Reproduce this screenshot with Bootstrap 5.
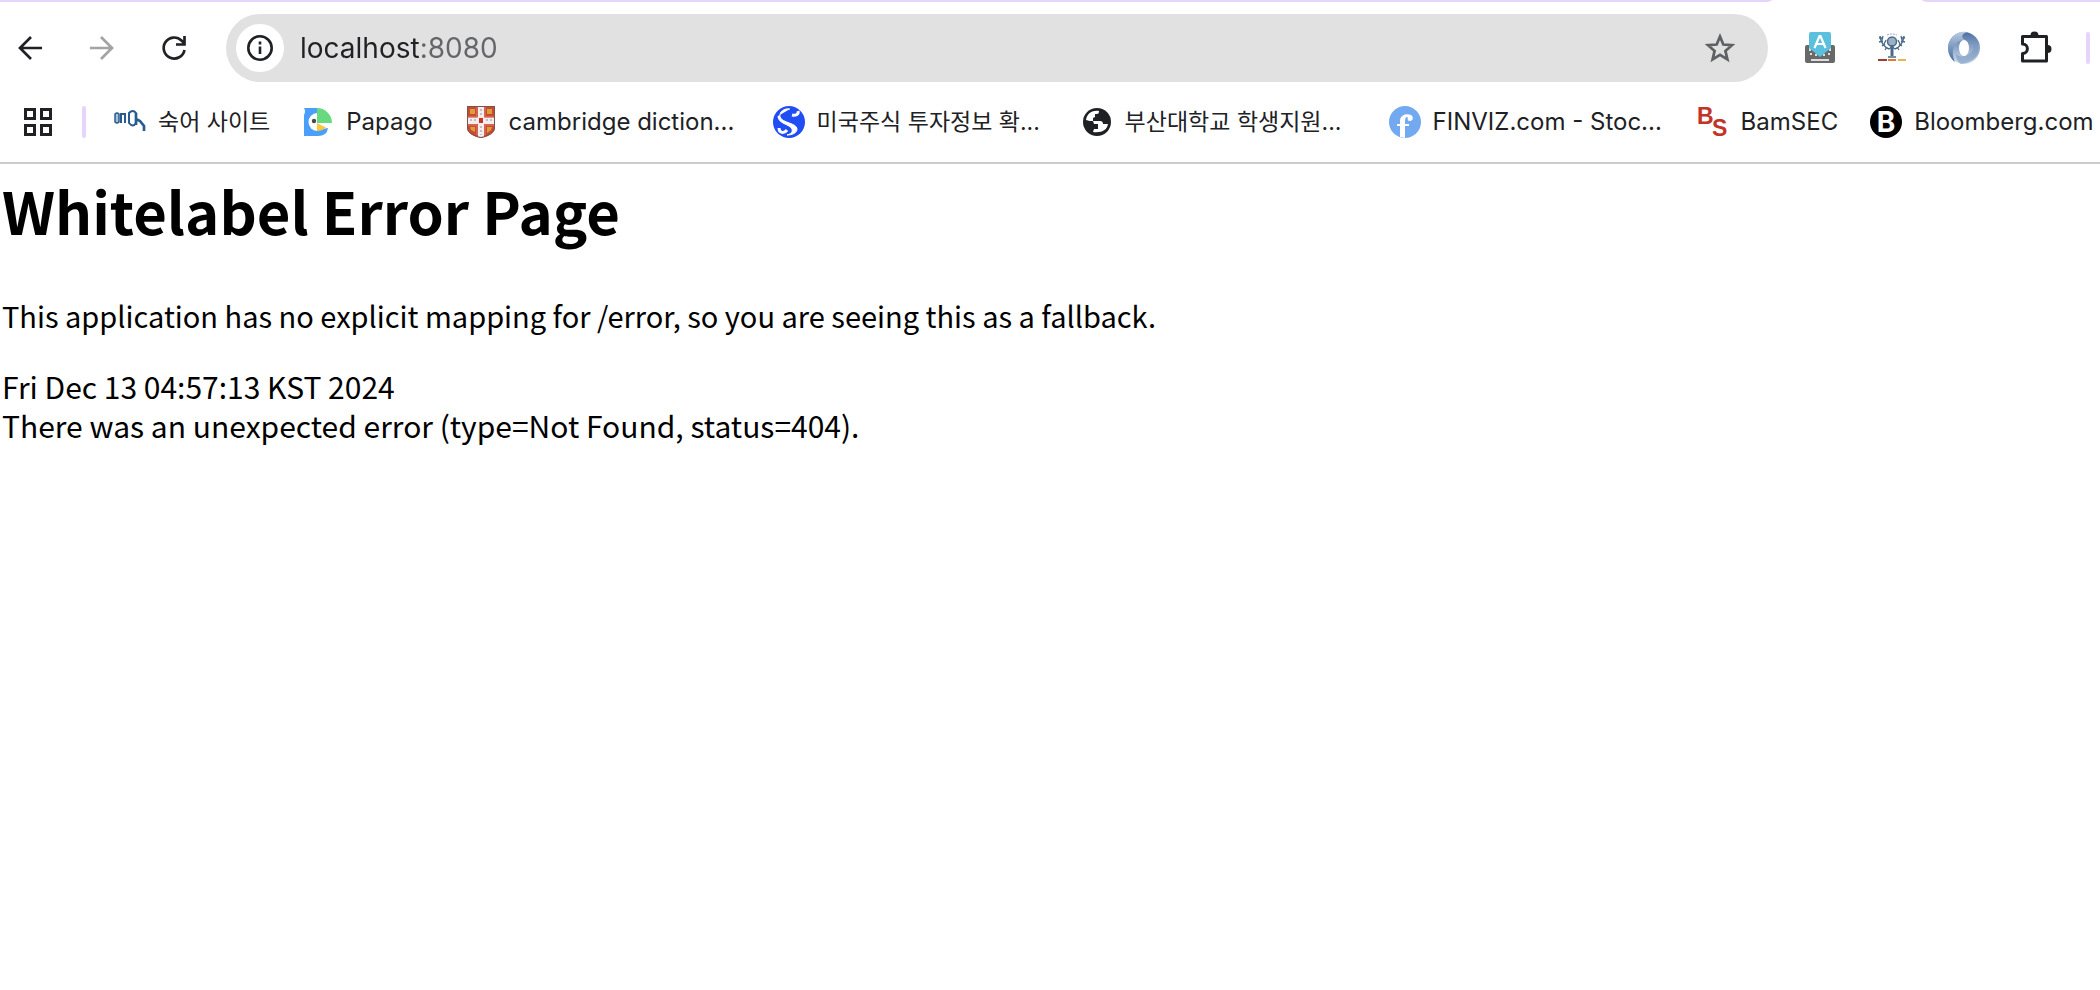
<!DOCTYPE html>
<html lang="en">
<head>
<meta charset="utf-8">
<meta name="viewport" content="width=device-width, initial-scale=1">
<title>localhost:8080</title>
<link href="https://cdn.jsdelivr.net/npm/bootstrap@5.3.0/dist/css/bootstrap.min.css" rel="stylesheet">
<style>
:root { --ink: #202124; --lilac: #e6d5fa; --rule: #cccccc; }
body { background: #fff; color: #000; overflow-x: hidden; font-family: "Noto Sans CJK KR", "Noto Sans", sans-serif; }
.browser-ui { font-family: Inter, "Noto Sans CJK KR", sans-serif; color: var(--ink); border-bottom: 2px solid var(--rule); }
.tab-edge { height: 2px; }
.tab-edge span { background: var(--lilac); }
.edge-start { border-bottom-right-radius: 8px 2px; }
.edge-end { border-bottom-left-radius: 8px 2px; width: 178px; }
.tab-gap { width: 150px; }
.toolbar { height: 92px; padding-left: 14px; padding-right: 10px; }
.tool { border: 0; padding: 0; background: none; width: 32px; height: 32px; line-height: 0; color: var(--ink); flex: none; }
.tool:disabled { color: #a3a3a3; }
.tool svg, .mark-icon { width: 32px; height: 32px; display: block; flex: none; overflow: visible; }
.nav-tools { gap: 40px; margin-right: 36px; }
.omnibox { height: 68px; background: #e1e1e1; padding: 0 32px 0 10px; }
.site-info { width: 48px; height: 48px; background: #fff; border: 0; padding: 0; flex: none; color: var(--ink); }
.address { border: 0; outline: 0; font-size: 28px; height: 48px; line-height: 48px; padding: 0; margin-left: 16px; color: var(--ink);
  background: linear-gradient(90deg, #202124 119px, #646569 119px); -webkit-background-clip: text; background-clip: text; -webkit-text-fill-color: transparent; }
.ext-tools { gap: 40px; margin: 0 34px 0 36px; }
.bar-rule { width: 4px; height: 32px; border-radius: 2px; background: var(--lilac); flex: none; }
.bookmarks { height: 68px; padding-bottom: 12px; padding-left: 22px; }
.bookmarks .bar-rule { margin: 0 28px; }
.bm { gap: 12px; font-size: 24px; line-height: 32px; color: var(--ink); margin-right: 32px; flex: none; white-space: nowrap; }
.bm:lang(ko) { font-size: 23px; }
.bm-capped { width: 276px; }
.error-page { padding: 8px 2px; font-size: 30px; line-height: 39px; }
.error-page h1 { font-size: 58px; line-height: 76px; font-weight: 700; margin-bottom: 48px; }
.error-page p { font-size: 29px; margin-bottom: 32px; }
</style>
</head>
<body>
<header class="browser-ui">
  <div class="tab-edge d-flex"><span class="edge-start flex-grow-1"></span><div class="tab-gap"></div><span class="edge-end"></span></div>
  <div class="toolbar d-flex align-items-center">
    <div class="nav-tools d-flex">
      <button class="tool" type="button" aria-label="Back"><svg viewBox="0 0 32 32" fill="none" stroke="currentColor" stroke-width="2.700"><path d="M28 16H6M17 5 6 16l11 11"/></svg></button>
      <button class="tool" type="button" aria-label="Forward" disabled><svg viewBox="0 0 32 32" fill="none" stroke="currentColor" stroke-width="2.700"><path d="M4 16h22M15 5l11 11-11 11"/></svg></button>
      <button class="tool" type="button" aria-label="Reload"><svg viewBox="0 0 32 32" fill="none" stroke="currentColor" stroke-width="2.700"><path d="M26.500 18A10.500 10.500 0 1 1 23.500 8.500L26 11M26.500 4v8.500H18"/></svg></button>
    </div>
    <div class="omnibox d-flex align-items-center flex-grow-1 rounded-pill">
      <button class="site-info rounded-circle d-flex align-items-center justify-content-center" type="button" aria-label="View site information"><svg width="28" height="28" viewBox="0 0 28 28" fill="none" stroke="currentColor" stroke-width="2.600"><circle cx="14" cy="14" r="11.700"/><path d="M14 12.500v7.500M14 7.500v3"/></svg></button>
      <input class="address flex-grow-1" type="text" value="localhost:8080" aria-label="Address">
      <button class="tool" type="button" aria-label="Bookmark this tab"><svg viewBox="0 0 32 32" fill="none" stroke="#5f6063" stroke-width="2.700"><path d="m16 4.500 3.300 8 8.700.700-6.600 5.700 2 8.500L16 22.800l-7.400 4.600 2-8.500L4 13.200l8.700-.7z"/></svg></button>
    </div>
    <div class="ext-tools d-flex align-items-center">
      <button class="tool" type="button" aria-label="Keyboard extension"><svg viewBox="0 0 32 32"><path fill="#696969" d="M3 13h26a2 2 0 0 1 2 2v14a2 2 0 0 1-2 2H3a2 2 0 0 1-2-2V15a2 2 0 0 1 2-2z"/><g fill="#ddd"><path d="M5 16h2v3H5zM25 16h2v3h-2zM6 21h2v2H6zM11 22h2v2h-2zM19 22h2v2h-2zM24 21h2v2h-2zM7 27h18v2H7z"/></g><path fill="#5bc0de" d="M7 0h18a2 2 0 0 1 2 2v14L16 25 5 16V2a2 2 0 0 1 2-2z"/><path d="m10.500 16 5-12h1l5 12M12.500 12h7" fill="none" stroke="#fff" stroke-width="2.200"/></svg></button>
      <button class="tool" type="button" aria-label="Trophy extension"><svg viewBox="0 0 32 32"><g fill="none" stroke="#4a6a88"><path d="M4 4c1 7 4 11 9 13M28 4c-1 7-4 11-9 13" stroke-width="1.500"/><path d="M3 6l3 0M3 10l4-1M6 14l3-2M9 18l2-3M7 4l-1 4M10 8l-2 4M29 6h-3M29 10l-4-1M26 14l-3-2M23 18l-2-3M25 4l1 4M22 8l2 4" stroke-width="1.300"/><path d="M11 3q5-2 10 0" stroke-dasharray="2 1" stroke="#93a7ba"/><circle cx="16" cy="9.500" r="4.500" fill="#9bb1c4" stroke-width="1.500"/><path d="M16 13v11" stroke-width="3"/><path d="M12 25h8M13 17l3-2 3 2" stroke-width="1.500"/></g><path fill="#a33a30" d="M2 27h9v2H2z"/><path fill="#dc7a35" d="M12 27h8v2h-8z"/><path fill="#e5b74f" d="M22 27h8v2h-8z"/></svg></button>
      <button class="tool" type="button" aria-label="Ring extension"><svg viewBox="0 0 32 32"><defs><linearGradient id="ringA" x1="0" y1="0" x2="0" y2="1"><stop stop-color="#b9cbe2"/><stop offset="1" stop-color="#45699d"/></linearGradient><linearGradient id="ringB" x1="0" y1="0" x2="0" y2="1"><stop stop-color="#4c6fa2"/><stop offset="1" stop-color="#d2e0f0"/></linearGradient></defs><circle cx="16" cy="16" r="16" fill="url(#ringB)"/><path fill="url(#ringA)" d="M19 0C8-2 0 7 0 16c0 6 3 11 7 14C2 19 6 8 17 8c-6-4-1-7 2-8z"/><path fill="#7795bd" d="M13 32c8-1 15-5 17-11 2-5-1-11-6-14 4 8 1 16-8 17-3 1-6 0-8-2 0 5 2 8 5 10z" opacity=".55"/><ellipse cx="16" cy="16" rx="5" ry="8" fill="#fff"/></svg></button>
      <button class="tool" type="button" aria-label="Extensions"><svg viewBox="0 0 32 32"><path fill="none" stroke="#202124" stroke-width="3" stroke-linejoin="round" d="M2.500 4.500h24v24.500h-24v-7.500c6.500 0 6.500-9.500 0-9.500z"/><path fill="#202124" d="M10.500 3.500a4 4 0 0 1 8 0zM27.500 13a4 4 0 0 1 0 8z"/></svg></button>
    </div>
    <span class="bar-rule"></span>
  </div>
  <nav class="bookmarks d-flex align-items-center" aria-label="Bookmarks">
    <button class="tool" type="button" aria-label="Apps"><svg viewBox="0 0 32 32" fill="none" stroke="currentColor" stroke-width="3"><path d="M3.500 3.500h9v9h-9zM19.500 3.500h9v9h-9zM3.500 19.500h9v9h-9zM19.500 19.500h9v9h-9z"/></svg></button>
    <span class="bar-rule"></span>
    <a class="bm d-flex align-items-center text-decoration-none" href="#" lang="ko"><svg class="mark-icon" viewBox="0 0 32 32" fill="none" stroke="#285c91" stroke-width="2"><path fill="#a9bfd5" stroke-width="1.500" d="M1 8q2-2 4 0v8q-2 2-4 0z"/><path d="M7 17V8h4v9"/><path d="M15 7q4-4 7 0v10q-3 5-7 0z"/><path d="M22 13l4 2 4 5v5M22 7v12" stroke-width="2.700"/></svg><span>숙어 사이트</span></a>
    <a class="bm d-flex align-items-center text-decoration-none" href="#"><svg class="mark-icon" viewBox="0 0 32 32"><path fill="#499ffa" d="M2 2h13v22l11-2q-1 8-10 8H2V9q2-4 0-7z"/><path fill="#fff" d="M15 7a8.500 9 0 0 0 0 18z"/><path fill="#69d980" d="M15 2a15 15 0 0 1 15 15H15z"/><path fill="#f9c83f" d="M15 17l9 4.500q-4 3.500-9 3.500z"/><circle cx="12" cy="15" r="2.200" fill="#4a4851"/></svg><span>Papago</span></a>
    <a class="bm bm-capped d-flex align-items-center text-decoration-none" href="#"><svg class="mark-icon" viewBox="0 0 32 32"><path d="M2 0h28v22c0 5-7 9-14 10C9 31 2 27 2 22z" fill="#c94a34"/><path d="M13 1h6v30h-6zM3 11h26v7H3z" fill="#f4eeee"/><path d="M12 1v10H3M20 1v10h9M12 29V19H3M20 29V19h9" fill="none" stroke="#dc6e5c" stroke-width="1.500"/><path fill="#d9a035" d="M5 3h5v5H5zM22 3h5v5h-5zM5 21h5v5L6 24zM22 21h5l-1 3-4 3z"/><path fill="#c93626" d="M14 12h4v5h-4z"/><path d="M16 3v7M16 20v9M5 14h6M21 14h6" stroke="#c4bfc0" stroke-width="2" stroke-dasharray="2 2"/><path d="M2.500.500h27V22c0 5-7 8-13.500 9.500C9 30 2.500 27 2.500 22z" fill="none" stroke="#79544c"/></svg><span>cambridge diction...</span></a>
    <a class="bm bm-capped d-flex align-items-center text-decoration-none" href="#" lang="ko"><svg class="mark-icon" viewBox="0 0 32 32"><circle cx="16" cy="16" r="16" fill="#204df4"/><path d="M17 3C11 2 6 6 7 11c2 6 17 6 17 12 0 4-5 6-10 6 4-1 6-3 5-6C17 18 5 18 5 10" fill="#fff" stroke="#fff" stroke-width="1"/><path d="M19 9c4 1 7-1 6-4M6 22c0 5 5 6 8 2" fill="none" stroke="#fff" stroke-width="3"/></svg><span>미국주식 투자정보 확...</span></a>
    <a class="bm bm-capped d-flex align-items-center text-decoration-none" href="#" lang="ko"><svg class="mark-icon" viewBox="0 0 32 32"><circle cx="16" cy="16" r="14" fill="#202124"/><path fill="#fff" d="M5 14C6 7 12 4 18 5c0 3-1 3-4 3v3l-2 1v3h7q3 0 3 3h5c-1 6-6 9-15 8l1-3h4v-5h-4l-1-3c-3 0-4 0-7-1z"/></svg><span>부산대학교 학생지원...</span></a>
    <a class="bm bm-capped d-flex align-items-center text-decoration-none" href="#"><svg class="mark-icon" viewBox="0 0 32 32"><circle cx="16" cy="16" r="16" fill="#73a9f0"/><path fill="#fff" d="M11 31V20H8v-2h3v-3c0-6 6-8 11-6 3 2 2 6-1 6-4 0-1-4-3-4-2 0-2 3-2 7h4v2h-4v12z"/></svg><span>FINVIZ.com - Stoc...</span></a>
    <a class="bm d-flex align-items-center text-decoration-none" href="#"><svg class="mark-icon" viewBox="0 0 32 32" fill="#c13427" font-family="Liberation Sans, sans-serif" font-weight="700"><text x="0" y="18" font-size="23">B</text><text x="15" y="30" font-size="23">S</text></svg><span>BamSEC</span></a>
    <a class="bm d-flex align-items-center text-decoration-none" href="#"><svg class="mark-icon" viewBox="0 0 32 32"><circle cx="16" cy="16" r="16" fill="#000"/><text x="16" y="26" text-anchor="middle" fill="#fff" font-family="Inter, sans-serif" font-size="28" font-weight="700">B</text></svg><span>Bloomberg.com</span></a>
  </nav>
</header>
<main class="error-page">
  <h1>Whitelabel Error Page</h1>
  <p>This application has no explicit mapping for /error, so you are seeing this as a fallback.</p>
  <div>Fri Dec 13 04:57:13 KST 2024</div>
  <div>There was an unexpected error (type=Not Found, status=404).</div>
</main>
<script src="https://cdn.jsdelivr.net/npm/bootstrap@5.3.0/dist/js/bootstrap.bundle.min.js"></script>
</body>
</html>
